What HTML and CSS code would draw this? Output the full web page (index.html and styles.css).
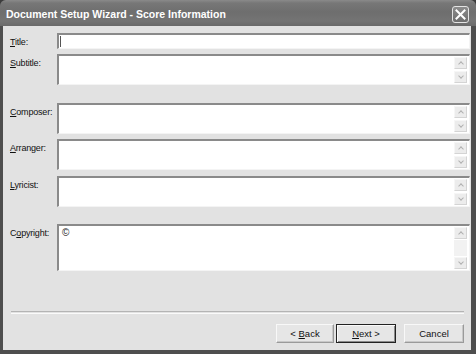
FILE: index.html
```html
<!DOCTYPE html>
<html>
<head>
<meta charset="utf-8">
<link rel="stylesheet" href="styles.css">
</head>
<body>
<div class="window">
  <div class="titlebar">
    <span class="title">Document Setup Wizard - Score Information</span>
    <span class="close"><svg width="13" height="13" viewBox="0 0 13 13"><path d="M2.5 2.5 L10.5 10.5 M10.5 2.5 L2.5 10.5" stroke="#fff" stroke-width="2" stroke-linecap="square"/></svg></span>
  </div>
  <div class="body">
    <div class="form">
      <div class="row r-title"><label><u>T</u>itle:</label><div class="field input"><span class="caret"></span></div></div>
      <div class="row r-sub"><label><u>S</u>ubtitle:</label><div class="field area"><div class="content"></div><div class="sb"><span class="btn up"></span><span class="track"></span><span class="btn down"></span></div></div></div>
      <div class="row r-comp"><label><u>C</u>omposer:</label><div class="field area"><div class="content"></div><div class="sb"><span class="btn up"></span><span class="track"></span><span class="btn down"></span></div></div></div>
      <div class="row r-arr"><label><u>A</u>rranger:</label><div class="field area"><div class="content"></div><div class="sb"><span class="btn up"></span><span class="track"></span><span class="btn down"></span></div></div></div>
      <div class="row r-lyr"><label><u>L</u>yricist:</label><div class="field area"><div class="content"></div><div class="sb"><span class="btn up"></span><span class="track"></span><span class="btn down"></span></div></div></div>
      <div class="row r-copy"><label>C<u>o</u>pyright:</label><div class="field area tall"><div class="content">©</div><div class="sb"><span class="btn up"></span><span class="track light"></span><span class="btn down"></span></div></div></div>
    </div>
    <div class="sep"></div>
    <div class="buttons">
      <button class="b back">&lt; <u>B</u>ack</button>
      <button class="b default"><u>N</u>ext &gt;</button>
      <button class="b cancel">Cancel</button>
    </div>
  </div>
</div>
</body>
</html>
```
FILE: styles.css
```css
html, body { margin: 0; padding: 0; background: #3c3c3c; }
body { width: 476px; height: 354px; overflow: hidden; font-family: "Liberation Sans", Arial, sans-serif; }
.window {
  width: 476px; height: 354px; box-sizing: border-box;
  display: flex; flex-direction: column;
  background: #4e4e4e;
  border-radius: 6px 6px 0 0;
  overflow: hidden;
}
.titlebar {
  height: 26px; flex: none;
  background: linear-gradient(#8a8a8a 0, #777 3px, #6e6e6e 12px, #747474 21px, #6a6a6a 26px);
  display: flex; align-items: center; justify-content: space-between;
  padding: 0 5px 0 6px; box-sizing: border-box;
}
.title { color: #fff; font-weight: bold; font-size: 10.5px; font-family: "Liberation Sans", Arial, sans-serif; position: relative; top: 1px; }
.close {
  width: 17px; height: 17px; box-sizing: border-box;
  border: 1px solid #e4e4e4; border-radius: 3px;
  background: linear-gradient(#8c8c8c, #6e6e6e);
  display: flex; align-items: center; justify-content: center;
  margin-right: 2px; position: relative; top: 1px;
}
.body {
  flex: 1; background: #e2e2e2;
  margin: 0 5px 4px 3px;
  display: flex; flex-direction: column;
  padding: 7px 0 0 0;
}
.form { display: flex; flex-direction: column; padding-left: 7px; padding-right: 1px; }
.row { display: flex; }
.row label {
  width: 47px; flex: none; font-size: 9px; color: #111;
  padding-top: 4px; letter-spacing: -0.2px;
}
.row label u { text-decoration: underline; }
.r-sub { margin-top: 5px; }
.r-comp { margin-top: 18px; }
.r-arr { margin-top: 5px; }
.r-lyr { margin-top: 6px; }
.r-copy { margin-top: 17px; }
.field {
  flex: 1; box-sizing: border-box; background: #fff;
  border-top: 2px solid #8a8a8a; border-left: 2px solid #8a8a8a;
  border-right: 1px solid #f4f4f4; border-bottom: 1px solid #f4f4f4;
  display: flex;
}
.input { height: 16px; align-items: center; }
.caret { width: 1px; height: 11px; background: #555; margin-left: 1px; }
.area { height: 31px; }
.area.tall { height: 47px; }
.content { flex: 1; font-size: 10px; line-height: 10px; padding: 2px 0 0 3px; color: #222; }
.sb { width: 13px; flex: none; display: flex; flex-direction: column; margin: 1px 2px 1px 0; }
.track { flex: 1; }
.track.light { background: #f2f2f2; margin: 1px 0; }
.btn {
  height: 12px; flex: none; box-sizing: border-box;
  background: #ececec; border: 1px solid #f6f6f6; border-right-color: #d4d4d4; border-bottom-color: #d4d4d4;
  position: relative;
}
.btn::after {
  content: ""; position: absolute; left: 4px; width: 3px; height: 3px;
  border-left: 1px solid #b0b0b0; border-top: 1px solid #b0b0b0;
}
.btn.up::after { top: 4px; transform: rotate(45deg); }
.btn.down::after { top: 2px; transform: rotate(225deg); }
.sep {
  margin: 40px 7px 0 8px; height: 1px; border-top: 1px solid #b4b4b4; border-bottom: 1px solid #fafafa;
}
.buttons { display: flex; justify-content: flex-end; padding: 10px 7px 0 0; }
.b {
  width: 58px; height: 19px; box-sizing: border-box; margin: 0; padding: 0;
  font-family: "Liberation Sans", Arial, sans-serif; font-size: 9.5px; color: #111;
  background: #e6e6e6;
  border: 1px solid #f8f8f8; border-right-color: #9a9a9a; border-bottom-color: #9a9a9a;
  box-shadow: inset -1px -1px 0 #c8c8c8;
}
.b.back { margin-right: 2px; }
.b.default { width: 60px; border: 1px solid #222; box-shadow: inset 1px 1px 0 #fafafa, inset -1px -1px 0 #8a8a8a; }
.b.cancel { margin-left: 8px; width: 60px; }
```
